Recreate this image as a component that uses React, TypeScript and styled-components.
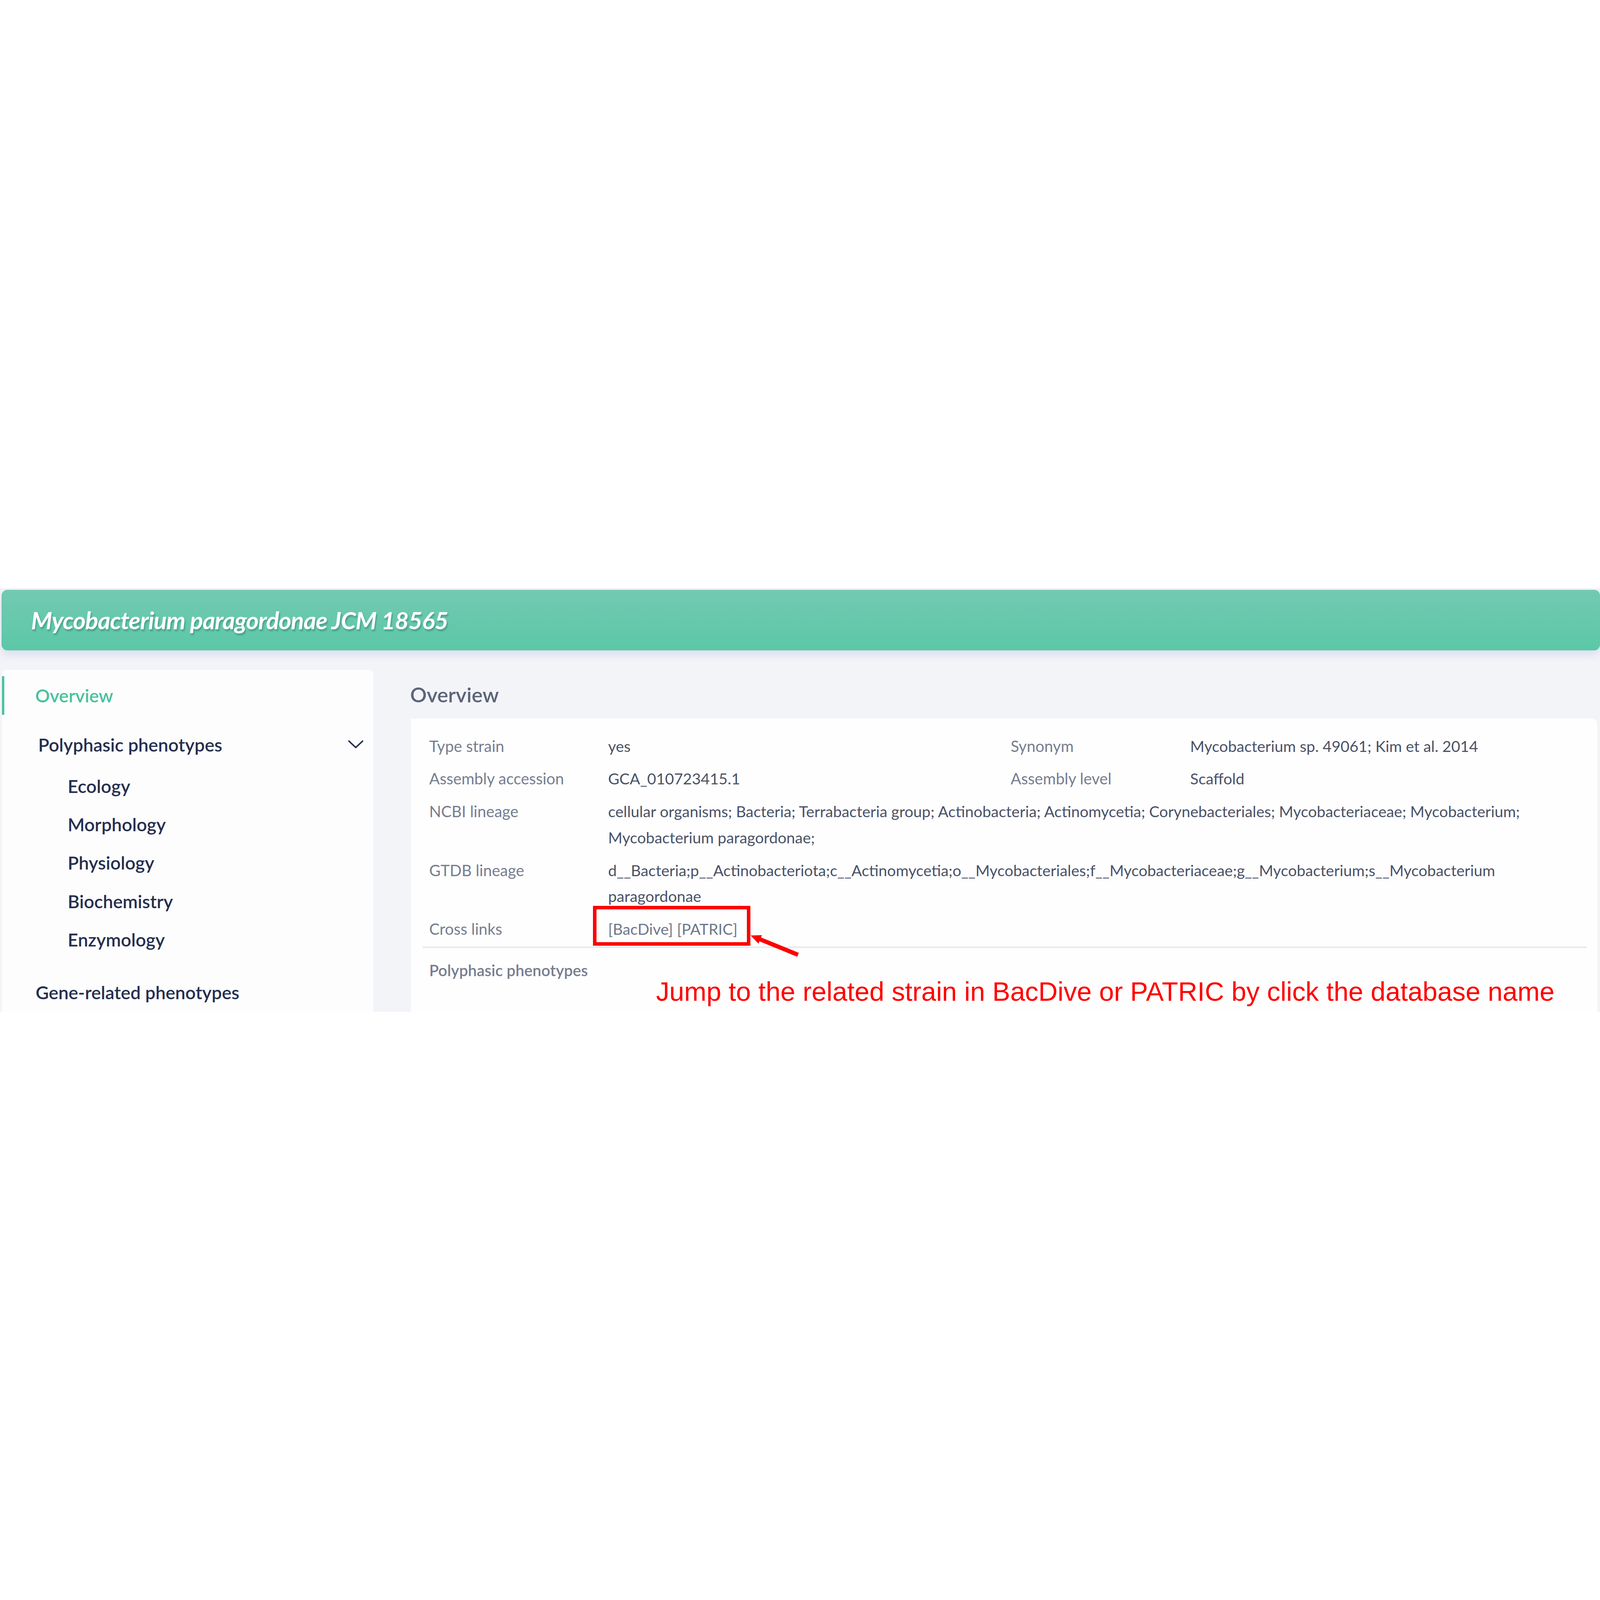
import React from 'react'
import styled, { createGlobalStyle } from 'styled-components'

// the slide is drawn on a 7680-unit grid; one unit follows the window width
const u = (n: number) => `calc(${n} * var(--u))`

const GlobalStyle = createGlobalStyle`
  :root {
    --u: calc(100vw / 7680);
  }
  html, body {
    margin: 0;
    padding: 0;
    background: #ffffff;
    overflow: hidden;
  }
  body {
    font-family: Lato, "Noto Sans", sans-serif;
  }
`

const Stage = styled.div`
  display: flex;
  flex-direction: column;
  justify-content: center;
  min-height: 100vh;
`

const Slide = styled.div`
  position: relative;
  width: 100%;
`

const Shot = styled.div`
  height: ${u(2032)};
  padding-top: ${u(7)};
  box-sizing: border-box;
  background: #f3f4f8;
  overflow: hidden;
`

const Banner = styled.header`
  display: flex;
  align-items: center;
  height: ${u(290)};
  margin-left: ${u(8)};
  padding-left: ${u(141)};
  border-radius: ${u(28)};
  background: linear-gradient(180deg, #73c9b1 0%, #5bc8a7 100%);
  box-shadow: 0 ${u(18)} ${u(40)} rgba(214, 216, 236, 0.9);
`

const Title = styled.h1`
  margin: 0;
  font-size: ${u(116)};
  font-style: italic;
  font-weight: 700;
  letter-spacing: ${u(-2)};
  color: #ffffff;
  text-shadow: ${u(5)} ${u(9)} ${u(7)} rgba(40, 118, 94, 0.45);
`

const Body = styled.div`
  display: flex;
  gap: ${u(177)};
  padding: ${u(95)} 0 0 ${u(10)};
`

const Sidebar = styled.nav`
  flex: none;
  width: ${u(1782)};
  height: ${u(1700)};
  padding-top: ${u(29)};
  box-sizing: border-box;
  border-radius: ${u(20)};
  background: #fdfdfe;
`

const NavItem = styled.div<{ $active?: boolean; $indent?: number }>`
  display: flex;
  align-items: center;
  height: ${u(186)};
  padding-left: ${p => u(148 + (p.$indent || 0))};
  border-left: ${u(12)} solid ${p => (p.$active ? '#4cc39e' : 'transparent')};
  font-size: ${u(87)};
  font-weight: 600;
  color: ${p => (p.$active ? '#47c29b' : '#252f4e')};
`

const GroupHead = styled(NavItem)`
  justify-content: space-between;
  margin-top: ${u(50)};
  padding-right: ${u(48)};
`

const SubList = styled.div`
  display: flex;
  flex-direction: column;
  margin-top: ${u(14)};
`

const SubItem = styled.div`
  display: flex;
  align-items: center;
  height: ${u(184)};
  padding-left: ${u(315)};
  font-size: ${u(87)};
  font-weight: 600;
  color: #252f4e;
`

const LastItem = styled(NavItem)`
  margin-top: ${u(69)};
`

const ChevronIcon = styled.svg`
  width: ${u(74)};
  height: ${u(40)};
`

const Main = styled.main`
  flex: 1;
  min-width: 0;
  display: flex;
  flex-direction: column;
`

const Heading = styled.h2`
  margin: ${u(53)} 0 ${u(52)};
  line-height: ${u(130)};
  font-size: ${u(99)};
  font-weight: 600;
  color: #5b6478;
`

const Card = styled.section`
  height: ${u(1500)};
  margin: 0 ${u(14)} 0 ${u(4)};
  padding: ${u(52)} ${u(100)} 0 ${u(87)};
  border-radius: 0 ${u(24)} 0 0;
  background: #fefefe;
`

const InfoGrid = styled.div`
  display: grid;
  grid-template-columns: ${u(859)} ${u(1932)} ${u(862)} minmax(0, 1fr);
  font-size: ${u(74)};
  line-height: ${u(125)};
`

const Label = styled.div<{ $strong?: boolean }>`
  padding: ${u(16)} 0;
  font-size: ${u(75)};
  font-weight: ${p => (p.$strong ? 600 : 400)};
  color: #767d8f;
`

const Value = styled.div<{ $wide?: boolean; $link?: boolean }>`
  padding: ${u(16)} 0;
  grid-column: ${p => (p.$wide ? 'span 3' : 'auto')};
  color: ${p => (p.$link ? '#6f7789' : '#4a5267')};
`

const Divider = styled.div`
  grid-column: 1 / -1;
  height: ${u(7)};
  margin: ${u(6)} ${u(-51)} ${u(28)} ${u(-32)};
  background: #e8eaef;
`

const MarkBox = styled.div`
  position: absolute;
  left: ${u(2847)};
  top: ${u(1525)};
  width: ${u(755)};
  height: ${u(191)};
  box-sizing: border-box;
  border: ${u(18)} solid #ff0000;
`

const Arrow = styled.svg`
  position: absolute;
  left: ${u(3590)};
  top: ${u(1644)};
  width: ${u(260)};
  height: ${u(140)};
`

const Note = styled.div`
  position: absolute;
  left: ${u(3149)};
  top: ${u(1871)};
  font-family: "Liberation Sans", Arial, sans-serif;
  font-size: ${u(128)};
  line-height: 1;
  color: #ff0000;
  white-space: nowrap;
`

const Chevron = () => (
  <ChevronIcon viewBox="0 0 74 40">
    <polyline points="4,4 37,35 70,4" fill="none" stroke="#252f4e" strokeWidth="7" strokeLinecap="round" strokeLinejoin="round" />
  </ChevronIcon>
)

const rows = [
  { label: 'Type strain', value: 'yes', label2: 'Synonym', value2: 'Mycobacterium sp. 49061; Kim et al. 2014' },
  { label: 'Assembly accession', value: 'GCA_010723415.1', label2: 'Assembly level', value2: 'Scaffold' },
]

const subItems = ['Ecology', 'Morphology', 'Physiology', 'Biochemistry', 'Enzymology']

export default function App() {
  return (
    <Stage>
      <GlobalStyle />
      <Slide>
        <Shot>
          <Banner>
            <Title>Mycobacterium paragordonae JCM 18565</Title>
          </Banner>
          <Body>
            <Sidebar>
              <NavItem $active>Overview</NavItem>
              <GroupHead $indent={14}>
                Polyphasic phenotypes
                <Chevron />
              </GroupHead>
              <SubList>
                {subItems.map(s => (
                  <SubItem key={s}>{s}</SubItem>
                ))}
              </SubList>
              <LastItem $indent={2}>Gene-related phenotypes</LastItem>
            </Sidebar>
            <Main>
              <Heading>Overview</Heading>
              <Card>
                <InfoGrid>
                  {rows.map(r => (
                    <React.Fragment key={r.label}>
                      <Label>{r.label}</Label>
                      <Value>{r.value}</Value>
                      <Label>{r.label2}</Label>
                      <Value>{r.value2}</Value>
                    </React.Fragment>
                  ))}
                  <Label>NCBI lineage</Label>
                  <Value $wide>
                    cellular organisms; Bacteria; Terrabacteria group; Actinobacteria; Actinomycetia; Corynebacteriales; Mycobacteriaceae; Mycobacterium;
                    <br />
                    Mycobacterium paragordonae;
                  </Value>
                  <Label>GTDB lineage</Label>
                  <Value $wide>
                    d__Bacteria;p__Actinobacteriota;c__Actinomycetia;o__Mycobacteriales;f__Mycobacteriaceae;g__Mycobacterium;s__Mycobacterium
                    <br />
                    paragordonae
                  </Value>
                  <Label>Cross links</Label>
                  <Value $wide $link>[BacDive] [PATRIC]</Value>
                  <Divider />
                  <Label $strong>Polyphasic phenotypes</Label>
                </InfoGrid>
              </Card>
            </Main>
          </Body>
        </Shot>

        <MarkBox />
        <Arrow viewBox="0 0 260 140">
          <polygon
            points="12,22 66.7,20.5 62.2,31.6 243.8,105.7 236.2,124.3 54.6,50.2 50.1,61.3"
            fill="#ff0000"
          />
        </Arrow>
        <Note>Jump to the related strain in BacDive or PATRIC by click the database name</Note>
      </Slide>
    </Stage>
  )
}
